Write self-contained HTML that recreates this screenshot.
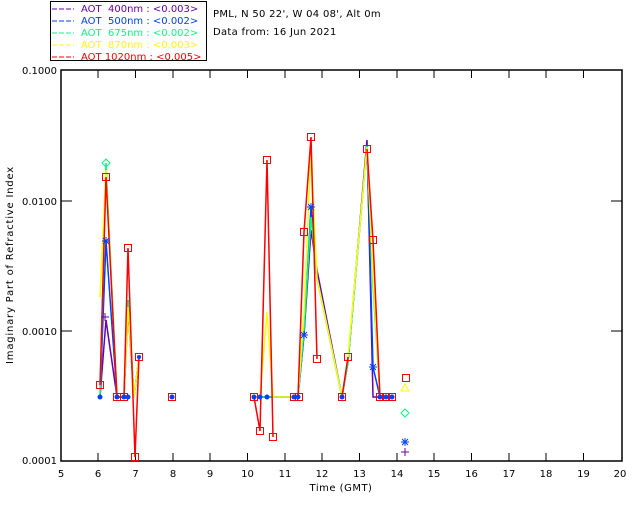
<!DOCTYPE html>
<html><head><style>
body{margin:0;background:#fff;width:640px;height:512px;overflow:hidden}
svg{display:block}
text{font-family:"DejaVu Sans","Liberation Sans",sans-serif;font-size:10px}
</style></head><body>
<svg width="640" height="512" viewBox="0 0 640 512">
<rect x="50.5" y="1.5" width="156" height="59" fill="#fff" stroke="#000"/>
<g font-size="10">
<line x1="52" y1="9" x2="74" y2="9" stroke="#6a00a8" stroke-dasharray="5,2"/>
<text x="81" y="12" fill="#6a00a8" xml:space="preserve">AOT  400nm : &lt;0.003&gt;</text>
<line x1="52" y1="21" x2="74" y2="21" stroke="#0040ff" stroke-dasharray="5,2"/>
<text x="81" y="24" fill="#0040ff" xml:space="preserve">AOT  500nm : &lt;0.002&gt;</text>
<line x1="52" y1="33" x2="74" y2="33" stroke="#00ff80" stroke-dasharray="5,2"/>
<text x="81" y="36" fill="#00ff80" xml:space="preserve">AOT  675nm : &lt;0.002&gt;</text>
<line x1="52" y1="45" x2="74" y2="45" stroke="#ffff00" stroke-dasharray="5,2"/>
<text x="81" y="48" fill="#ffff00" xml:space="preserve">AOT  870nm : &lt;0.003&gt;</text>
<line x1="52" y1="57" x2="74" y2="57" stroke="#ff0000" stroke-dasharray="5,2"/>
<text x="81" y="60" fill="#ff0000" xml:space="preserve">AOT 1020nm : &lt;0.005&gt;</text>
</g>
<text x="213" y="17" letter-spacing="0.3">PML, N 50 22', W 04 08', Alt 0m</text>
<text x="213" y="35" letter-spacing="0.3">Data from: 16 Jun 2021</text>

<rect x="61" y="70" width="561" height="391" fill="none" stroke="#000" stroke-width="1.5"/>
<g stroke="#000">
<line x1="61" y1="201" x2="72" y2="201"/><line x1="61" y1="331" x2="72" y2="331"/>
<line x1="611" y1="201" x2="622" y2="201"/><line x1="611" y1="331" x2="622" y2="331"/>
</g>
<g stroke="#000">
<path d="M98 461v-8M135.5 461v-8M173 461v-8M210 461v-8M247.5 461v-8M285 461v-8M322 461v-8M359.5 461v-8M397 461v-8M434 461v-8M471.5 461v-8M509 461v-8M546 461v-8M583.5 461v-8"/>
<path d="M98 70v8M135.5 70v8M173 70v8M210 70v8M247.5 70v8M285 70v8M322 70v8M359.5 70v8M397 70v8M434 70v8M471.5 70v8M509 70v8M546 70v8M583.5 70v8"/>
</g>
<g text-anchor="end">
<text x="57" y="74">0.1000</text><text x="57" y="205">0.0100</text><text x="57" y="335">0.0010</text><text x="57" y="464">0.0001</text>
</g>
<g text-anchor="middle">
<text x="61" y="477">5</text><text x="98" y="477">6</text><text x="135.5" y="477">7</text><text x="173" y="477">8</text><text x="210" y="477">9</text><text x="247.5" y="477">10</text><text x="285" y="477">11</text><text x="322" y="477">12</text><text x="359.5" y="477">13</text><text x="397" y="477">14</text><text x="434" y="477">15</text><text x="471.5" y="477">16</text><text x="509" y="477">17</text><text x="546" y="477">18</text><text x="583.5" y="477">19</text><text x="620" y="477">20</text>
<text x="341" y="491" letter-spacing="0.5">Time (GMT)</text>
<text transform="translate(13,265) rotate(-90)" letter-spacing="0.8">Imaginary Part of Refractive Index</text>
</g>

<g fill="none" stroke-width="1.5">
<polyline stroke="#6a00a8" points="100,397 106,320 117,397 124,397 128,310 134,397 139,357"/>
<polyline stroke="#6a00a8" points="254,397 260,397 267,397 273,397 294,397 298,397 304,335 311,230 317,270 342,397 348,362 367,140 373,397 380,397 392,397"/>
<polyline stroke="#0040ff" points="100,397 106,241 117,397 124,397 128,300 134,397 139,357"/>
<polyline stroke="#0040ff" points="254,397 260,397 267,397 273,397 294,397 298,397 304,335 311,207 317,278 342,397 348,362 367,145 373,367 380,397 392,397"/>
<polyline stroke="#00ff80" points="100,397 106,163 117,397 124,397 128,300 134,397 139,357"/>
<polyline stroke="#00ff80" points="254,397 260,397 267,397 273,397 294,397 298,397 304,330 311,217 317,278 342,397 348,362 367,145 373,286 380,397 392,397"/>
<polyline stroke="#ffff00" points="100,297 106,170 117,397 124,397 128,307 134,397 139,357"/>
<polyline stroke="#ffff00" points="254,397 260,397 267,312 273,397 294,397 298,397 304,312 311,150 317,278 342,397 348,357 367,147 373,275 380,397 392,397"/>
<polyline stroke="#ff0000" points="100,385 106,177 117,397 124,397 128,248 135,457 139,357"/>
<polyline stroke="#ff0000" points="254,397 260,431 267,160 273,437"/>
<polyline stroke="#ff0000" points="294,397 298,397 304,232 311,137 317,359"/>
<polyline stroke="#ff0000" points="342,397 348,357"/>
<polyline stroke="#ff0000" points="367,149 373,240 380,397 392,397"/>
</g>
<g fill="none" stroke="#ff0000">
<rect x="96.5" y="381.5" width="7" height="7"/><rect x="102.5" y="173.5" width="7" height="7"/>
<rect x="113.5" y="393.5" width="7" height="7"/><rect x="120.5" y="393.5" width="7" height="7"/>
<rect x="124.5" y="244.5" width="7" height="7"/><rect x="131.5" y="453.5" width="7" height="7"/>
<rect x="135.5" y="353.5" width="7" height="7"/><rect x="168.5" y="393.5" width="7" height="7"/>
<rect x="250.5" y="393.5" width="7" height="7"/><rect x="256.5" y="427.5" width="7" height="7"/>
<rect x="263.5" y="156.5" width="7" height="7"/><rect x="269.5" y="433.5" width="7" height="7"/>
<rect x="290.5" y="393.5" width="7" height="7"/><rect x="295.5" y="393.5" width="7" height="7"/>
<rect x="300.5" y="228.5" width="7" height="7"/><rect x="307.5" y="133.5" width="7" height="7"/>
<rect x="313.5" y="355.5" width="7" height="7"/><rect x="338.5" y="393.5" width="7" height="7"/>
<rect x="344.5" y="353.5" width="7" height="7"/><rect x="363.5" y="145.5" width="7" height="7"/>
<rect x="369.5" y="236.5" width="7" height="7"/><rect x="376.5" y="393.5" width="7" height="7"/>
<rect x="382.5" y="393.5" width="7" height="7"/><rect x="388.5" y="393.5" width="7" height="7"/>
<rect x="402.5" y="374.5" width="7" height="7"/>
</g>
<g fill="#0040ff">
<circle cx="100" cy="397" r="2.5"/><circle cx="117" cy="397" r="2.5"/><circle cx="124" cy="397" r="2.5"/><circle cx="128" cy="397" r="2.5"/><circle cx="139" cy="357" r="2"/><circle cx="172" cy="397" r="2.5"/>
<circle cx="254" cy="397" r="2.5"/><circle cx="260" cy="397" r="2.5"/><circle cx="267" cy="397" r="2.5"/><circle cx="294" cy="397" r="2.5"/><circle cx="298" cy="397" r="2.5"/><circle cx="342" cy="397" r="2.5"/><circle cx="380" cy="397" r="2.5"/><circle cx="386" cy="397" r="2.5"/><circle cx="392" cy="397" r="2.5"/>
</g>
<g stroke="#0040ff" fill="none">
<path d="M102 241h8M106 237v8M103 238l6 6M109 238l-6 6"/>
<path d="M300 335h8M304 331v8M301 332l6 6M307 332l-6 6"/>
<path d="M307 207h8M311 203v8M308 204l6 6M314 204l-6 6"/>
<path d="M369 367h8M373 363v8M370 364l6 6M376 364l-6 6"/>
<path d="M401 442h8M405 438v8M402 439l6 6M408 439l-6 6"/>
</g>
<path d="M405 409l4 4-4 4-4-4z" fill="none" stroke="#00ff80"/>
<path d="M106 159l4 4-4 4-4-4z" fill="none" stroke="#00ff80"/>
<path d="M405 384l4 7h-8z" fill="none" stroke="#ffff00"/>
<path d="M401 452h8M405 448v8M101 317h8M105 313v8" stroke="#6a00a8"/>
</svg>
</body></html>
